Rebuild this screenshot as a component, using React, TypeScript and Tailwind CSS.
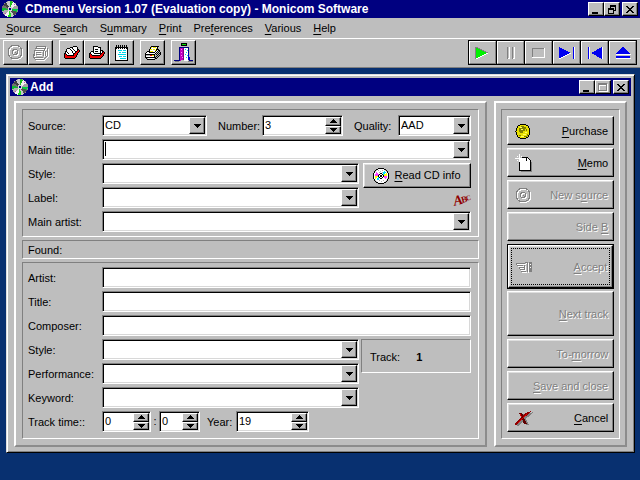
import React from "react";

const etched = "border border-t-[#808080] border-l-[#808080] border-r-white border-b-white";
const sunken =
  "border border-t-[#808080] border-l-[#808080] border-r-white border-b-white bg-white shadow-[inset_1px_1px_0_#000,inset_-1px_-1px_0_#d8d8d8]";
const smallRaised =
  "border border-t-white border-l-white border-r-black border-b-black shadow-[inset_-1px_-1px_0_#808080] bg-[#bebebe]";
const raised =
  "border border-t-white border-l-white border-r-black border-b-black shadow-[inset_-1px_-1px_0_#808080,inset_1px_1px_0_#dedede] bg-[#bebebe]";

function Svg({ w, h, children }: { w: number; h: number; children: React.ReactNode }) {
  return (
    <svg width={w} height={h} viewBox={`0 0 ${w} ${h}`} shapeRendering="crispEdges" className="block shrink-0" aria-hidden="true">
      {children}
    </svg>
  );
}

const inks: Record<string, string> = {
  K: "#000000",
  W: "#ffffff",
  R: "#f00000",
  Y: "#f0e800",
  G: "#b8b8b8",
};

/* Small bitmap, one letter per dot */
function Sprite({ rows }: { rows: string[] }) {
  return (
    <Svg w={rows[0].length} h={rows.length}>
      {rows.map((row, y) =>
        row.split("").map((c, x) => (inks[c] ? <rect key={`${x}-${y}`} x={x} y={y} width="1" height="1" fill={inks[c]} /> : null))
      )}
    </Svg>
  );
}

const cardBox = [
  ".........KKKK...",
  "......KKKWWWWK..",
  "...KKKWWKWWWWK..",
  "..KWWWKWWKWWWKK.",
  "..KWWWWKWWKWWKRK",
  ".KKWWWWWKWWKKRRK",
  ".KWKWWWWKWWKRRK.",
  "KKWWKWWWWKKRRK..",
  "KRKWWWWWWKRRRK..",
  "KRRKKKKKKKRRK...",
  "KRRRRRRRRRRRK...",
  "KRRRRRRRRRRK....",
  ".KKKKKKKKKK.....",
];

const cardBoxOpen = [
  "....KKKKK.......",
  "....KWWWWKKK....",
  "....KWWWWWWK....",
  "....KWKKKWWK....",
  "....KWWWWWWKKK..",
  "..KKKWKKKWWKWKK.",
  ".KWWKWWWWWWKWKRK",
  "KKWWWKKKKKKKKRRK",
  "KRKWWWWWWWWKRRK.",
  "KRRKKKKKKKKRRRK.",
  "KRRRRRRRRRRRRK..",
  "KRRRRRRRRRRRK...",
  ".KKKKKKKKKKK....",
];

const printer = [
  "......KKKKKKKK..",
  ".....KYWYYYWK...",
  ".....KWWWWWYK...",
  "....KYYWYYWKKK..",
  "....KWWWWWYKWKK.",
  "..KKKYYYWWKWKGK.",
  ".KWWKKKKKKWKGKGK",
  "KWWWWWWWWWKGKGKK",
  "KKKKKKKKKKGKGKGK",
  "KGGGGRRYYKGGKGK.",
  "KWWWWWWWWKGKGK..",
  "KKKKKKKKKKKGK...",
  ".KGWWWWWWGKK....",
  "..KKKKKKKK......",
];

function DiscLogo() {
  return (
    <Svg w={16} h={16}>
      <circle cx="8" cy="8" r="8" fill="#8a8a8a" />
      <path d="M8 8L1 4L4 1Z" fill="#404040" />
      <path d="M8 8L4 1L8 0Z" fill="#c8c8c8" />
      <path d="M8 8L8 0L11 1Z" fill="#20c020" />
      <path d="M8 8L11 1L15 4Z" fill="#f0f0f0" />
      <path d="M8 8L15 4L16 8Z" fill="#a0a0a0" />
      <path d="M8 8L16 8L15 11Z" fill="#00d040" />
      <path d="M8 8L15 11L12 15Z" fill="#505050" />
      <path d="M8 8L12 15L9 16Z" fill="#c8c8c8" />
      <path d="M8 8L9 16L6 16Z" fill="#20e020" />
      <path d="M8 8L6 16L2 14Z" fill="#f8f8f8" />
      <path d="M8 8L2 14L0 10Z" fill="#b0b0b0" />
      <path d="M8 8L0 10L0 7Z" fill="#10b830" />
      <path d="M8 8L0 7L1 4Z" fill="#707070" />
      <path d="M12 3h1v1h-1zM3 12h1v1h-1z" fill="#c040c0" />
      <rect x="6" y="6" width="4" height="4" fill="#d8d8d8" />
      <rect x="7" y="7" width="2" height="2" fill="#000080" />
    </Svg>
  );
}

function DiscColor() {
  return (
    <Svg w={16} h={16}>
      <circle cx="8" cy="8" r="7" fill="#fff" />
      <path d="M3 4L7 8L2 8Z" fill="#ff40ff" />
      <path d="M2 8L7 8L2 11Z" fill="#ffff00" />
      <path d="M3 11L7 8L5 13Z" fill="#00e0ff" />
      <path d="M13 4L9 8L11 3Z" fill="#00e0ff" />
      <path d="M14 8L9 8L14 5Z" fill="#ffff00" />
      <path d="M13 12L9 8L14 8Z" fill="#ff40ff" />
      <path d="M5 2h1v1h-1zM7 3h1v1h-1zM9 2h1v1h-1zM6 4h1v1h-1zM9 4h1v1h-1zM6 12h1v1h-1zM8 13h1v1h-1zM10 12h1v1h-1z" fill="#b0b0b0" />
      <path
        d="M5 0h6v1H5zM3 1h2v1H3zM11 1h2v1h-2zM2 2h1v1H2zM13 2h1v1h-1zM1 3h1v2H1zM14 3h1v2h-1zM0 5h1v6H0zM15 5h1v6h-1zM1 11h1v2H1zM14 11h1v2h-1zM2 13h1v1H2zM13 13h1v1h-1zM3 14h2v1H3zM11 14h2v1h-2zM5 15h6v1H5z"
        fill="#000"
      />
      <rect x="6" y="6" width="4" height="4" fill="#fff" />
      <path d="M7 5h2v1H7zM6 6h1v1H6zM9 6h1v1H9zM5 7h1v2H5zM10 7h1v2h-1zM6 9h1v1H6zM9 9h1v1H9zM7 10h2v1H7zM7 7h2v2H7z" fill="#000" />
    </Svg>
  );
}

function DiscGray() {
  return (
    <Svg w={17} h={17}>
      <g fill="none" stroke="#fff">
        <circle cx="9" cy="9" r="7" />
        <circle cx="9" cy="9" r="2.5" />
      </g>
      <g fill="none" stroke="#808080">
        <circle cx="8" cy="8" r="7" />
        <circle cx="8" cy="8" r="2.5" />
      </g>
      <rect x="8" y="8" width="1" height="1" fill="#808080" />
    </Svg>
  );
}

function StackGray() {
  const lines = "M4 2h9v3M3 4h9v3M4 2v2M2 6h9v6M2 6v6M1 13l2 2h9l3-3V4M4 8h5M4 10h5M1 10v3h10M13 7v5";
  return (
    <Svg w={17} h={17}>
      <path d={lines} transform="translate(1 1)" fill="none" stroke="#fff" />
      <path d={lines} fill="none" stroke="#808080" />
    </Svg>
  );
}

function Notepad() {
  return (
    <Svg w={14} h={16}>
      <path d="M0 2h13v14H0z" fill="#000" />
      <path d="M1 3h11v12H1z" fill="#fff" />
      <path d="M1 0h1v4H1zM3 0h1v4H3zM5 0h1v4H5zM7 0h1v4H7zM9 0h1v4H9zM11 0h1v4h-1z" fill="#000" />
      <path d="M3 5h4v1H3zM8 5h3v1H8zM4 7h2v1H4zM7 7h4v1H7zM3 9h8v1H3zM4 11h3v1H4zM8 11h3v1H8zM5 13h6v1H5z" fill="#00d8e8" />
    </Svg>
  );
}

function ExitDoor() {
  return (
    <Svg w={20} h={20}>
      <rect x="7" y="0" width="6" height="3" fill="#000" />
      <rect x="8" y="1" width="4" height="1" fill="#00e000" />
      <path d="M5 4h10v1h-10zM5 5h1v13h-1zM14 5h1v3h-1zM0 17h6v1H0zM15 17h4v1h-4z" fill="#000080" />
      <path d="M6 5h4v11l-4 2z" fill="#c000c0" />
      <path d="M7 6h1v1h-1zM7 9h1v1h-1zM7 12h1v1h-1zM8 14h1v1h-1z" fill="#ff80ff" />
      <path d="M9 5h1v12h-1z" fill="#800080" />
      <path d="M10 5h4v13h-4z" fill="#fff" />
      <path d="M11 6h1v1h-1zM13 7h1v1h-1zM12 9h1v1h-1zM11 11h1v1h-1zM13 12h1v1h-1zM12 14h1v1h-1z" fill="#00d8e8" />
      <path d="M14 8h1v2h-1z" fill="#000080" />
      <path d="M14 10h1v4h1v3h-2z" fill="#0000c0" />
      <path d="M1 18h4v1H1zM14 18h5v1h-5z" fill="#808080" />
    </Svg>
  );
}

function Coin() {
  return (
    <Svg w={18} h={17}>
      <ellipse cx="8" cy="8.5" rx="7" ry="7.5" fill="#e8e000" stroke="#000" />
      <path d="M6 3h3v1h2v2h-1v2h-2v2h-3v-1h-1v-4h1z" fill="#808000" />
      <path d="M5 4h2v1h-2zM6 6h2v1h-2zM8 11h3v1h-3zM10 9h2v1h-2zM6 13h3v1h-3z" fill="#ffff60" />
      <path d="M9 13h3v-2h1v2h-1v1h-3zM11 6h1v2h-1zM4 12h2v1h-2z" fill="#808000" />
    </Svg>
  );
}

function NewPage() {
  return (
    <Svg w={18} h={18}>
      <path d="M6 5h8v1h1v1h1v1h1v10H6z" fill="#808080" />
      <path d="M5 4h7l4 4v8H5z" fill="#fff" />
      <path d="M7 3h6v1h1v1h1v1h1v11H4V7h1v9h10V7h-4V4H7z" fill="#000" />
      <path d="M12 4l3 3h-3z" fill="#fff" />
      <path d="M4 0h1v8h-1zM0 4h9v1H0zM2 2h1v1h-1zM6 2h1v1h-1zM6 6h1v1h-1zM2 6h1v1h-1z" fill="#fff" />
    </Svg>
  );
}

function Hand() {
  const shape = "M0 2h9v1H0zM0 3h1v1H0zM1 4h6v1H1zM3 6h5v1H3zM3 7h1v1h-1zM4 8h4v1H4zM5 10h5v1H5zM9 1h2v1h-2zM11 1h1v10h-1zM8 4h1v5h-1z";
  return (
    <Svg w={18} h={13}>
      <path d={shape} transform="translate(1 1)" fill="#fff" />
      <path d={shape} fill="#808080" />
      <path d="M13 1h3v10h-3z" fill="#808080" />
      <path d="M14 3h1v1h-1zM14 6h1v1h-1z" fill="#fff" />
    </Svg>
  );
}

function RedCross() {
  return (
    <Svg w={18} h={16}>
      <g transform="translate(2 1)" fill="#808080">
        <path d="M0 12l6-6 5-4 5-2-5 5-5 4-4 5H0z" />
        <path d="M4 2h3l2 5 3 6H9L7 8z" />
      </g>
      <path d="M0 12l6-6 5-4 5-2-5 5-5 4-4 5H0z" fill="#900000" />
      <path d="M4 2h3l2 5 3 6H9L7 8z" fill="#600000" />
      <path d="M2 12l6-6 4-3-5 5-4 4zM5 3h1l1 3H6z" fill="#e00000" />
    </Svg>
  );
}

function DownArrow() {
  return (
    <Svg w={7} h={4}>
      <path d="M0 0h7v1H0zM1 1h5v1H1zM2 2h3v1H2zM3 3h1v1H3z" />
    </Svg>
  );
}

function UpArrow() {
  return (
    <Svg w={7} h={4}>
      <path d="M3 0h1v1H3zM2 1h3v1H2zM1 2h5v1H1zM0 3h7v1H0z" />
    </Svg>
  );
}

/* Field kinds */

function Combo({ id, value = "" }: { id: string; value?: string }) {
  return (
    <div className={`grid h-[21px] min-w-0 grid-cols-[minmax(0,1fr)_16px] p-px ${sunken}`}>
      <select id={id} defaultValue={value} className="col-span-2 col-start-1 row-start-1 h-4 appearance-none bg-transparent pl-px leading-4 outline-none">
        <option>{value}</option>
      </select>
      <span className={`pointer-events-none col-start-2 row-start-1 flex items-center justify-center ${smallRaised}`}>
        <DownArrow />
      </span>
    </div>
  );
}

function EditCombo({ id }: { id: string }) {
  return (
    <div className={`flex h-[21px] min-w-0 p-px ${sunken}`}>
      <span className="mt-px ml-px h-[14px] w-px bg-black" />
      <input id={id} className="min-w-0 flex-1 bg-transparent outline-none" />
      <button aria-label="Open list" className={`flex w-4 items-center justify-center ${smallRaised}`}>
        <DownArrow />
      </button>
    </div>
  );
}

function Spin({ id, value, label }: { id: string; value: string; label?: string }) {
  return (
    <div className={`flex h-[21px] min-w-0 p-px ${sunken}`}>
      <input id={id} aria-label={label} defaultValue={value} className="h-4 min-w-0 flex-1 bg-transparent pl-px leading-4 outline-none" />
      <div className="flex w-4 shrink-0 flex-col">
        <button aria-label="Up" className={`flex flex-1 items-center justify-center ${smallRaised}`}>
          <UpArrow />
        </button>
        <button aria-label="Down" className={`flex flex-1 items-center justify-center ${smallRaised}`}>
          <DownArrow />
        </button>
      </div>
    </div>
  );
}

function Row({ id, label, children }: { id: string; label: string; children: React.ReactNode }) {
  return (
    <div className="grid grid-cols-[74px_minmax(0,1fr)] items-center">
      <label htmlFor={id} className="pt-0.5">
        {label}
      </label>
      {children}
    </div>
  );
}

/* Text with one underlined access key */
function Key({ text, at = 0 }: { text: string; at?: number }) {
  return (
    <span className="whitespace-pre">
      {text.slice(0, at)}
      <span className="underline underline-offset-2">{text[at]}</span>
      {text.slice(at + 1)}
    </span>
  );
}

type SideButtonProps = {
  text: string;
  at?: number;
  icon?: React.ReactNode;
  tall?: boolean;
  disabled?: boolean;
  focus?: boolean;
};

function SideButton({ text, at, icon, tall, disabled, focus }: SideButtonProps) {
  return (
    <button disabled={disabled} className={`flex w-full ${tall ? "h-[45px]" : "h-[29px]"} ${focus ? "border border-black" : ""}`}>
      <span
        className={`flex h-full w-full items-center justify-between pt-0.5 pr-[5px] pl-[7px] ${raised} ${
          disabled ? "text-[#808080] [text-shadow:1px_1px_0_#fff]" : ""
        } ${focus ? "outline-1 -outline-offset-4 outline-dotted outline-black" : ""}`}
      >
        <span className="w-[18px]">{icon}</span>
        <Key text={text} at={at} />
      </span>
    </button>
  );
}

function WindowButtons({ middle }: { middle: "restore" | "max" }) {
  const btn = `flex h-[14px] w-4 items-center justify-center ${smallRaised}`;
  return (
    <div className="flex">
      <button aria-label="Minimize" className={btn}>
        <Svg w={10} h={9}>
          <path d="M1 7h6v2H1z" />
        </Svg>
      </button>
      <button aria-label={middle === "restore" ? "Restore" : "Maximize"} disabled={middle === "max"} className={btn}>
        <Svg w={10} h={9}>
          {middle === "restore" ? (
            <path d="M3 0h6v6H7V5h1V2H4v1H3zM1 3h6v6H1zM2 5v3h4V5z" fillRule="evenodd" />
          ) : (
            <>
              <path d="M1 1h9v8H1zM2 3v5h7V3z" fillRule="evenodd" fill="#fff" />
              <path d="M0 0h9v8H0zM1 2v5h7V2z" fillRule="evenodd" fill="#808080" />
            </>
          )}
        </Svg>
      </button>
      <button aria-label="Close" className={`ml-0.5 ${btn}`}>
        <Svg w={8} h={7}>
          <path d="M0 0h2v1h1v1h2V1h1V0h2v1H7v1H6v1H5v1h1v1h1v1h1v1H6V6H5V5H3v1H2v1H0V6h1V5h1V4h1V3H2V2H1V1H0z" />
        </Svg>
      </button>
    </div>
  );
}

const menus: [string, number][] = [
  ["Source", 0],
  ["Search", 1],
  ["Summary", 1],
  ["Print", 0],
  ["Preferences", 3],
  ["Various", 0],
  ["Help", 0],
];

const tools: { name: string; icon: React.ReactNode; gap?: boolean; off?: boolean }[] = [
  { name: "New source", icon: <DiscGray />, off: true },
  { name: "Edit source", icon: <StackGray />, off: true },
  { name: "Search", icon: <Sprite rows={cardBox} />, gap: true },
  { name: "Search card", icon: <Sprite rows={cardBoxOpen} /> },
  { name: "Summary", icon: <Notepad /> },
  { name: "Print", icon: <Sprite rows={printer} />, gap: true },
  { name: "Exit", icon: <ExitDoor />, gap: true },
];

const players: { name: string; icon: React.ReactNode; off?: boolean }[] = [
  {
    name: "Play",
    icon: (
      <>
        <path d="M1 0l12 6-12 6z" fill="#00f000" />
        <path d="M0 0h1v12H0z" fill="#808080" />
        <path d="M1 0L13 6" stroke="#808080" />
        <path d="M1 12L13 6" stroke="#fff" />
      </>
    ),
  },
  {
    name: "Pause",
    off: true,
    icon: (
      <>
        <path d="M4 0h1v12h-1zM9 0h1v12h-1z" fill="#808080" />
        <path d="M6 0h1v12h-2v-1h1zM11 0h1v12h-2v-1h1z" fill="#fff" />
      </>
    ),
  },
  {
    name: "Stop",
    off: true,
    icon: (
      <>
        <path d="M1 1h13v1H1zM1 1h1v10H1z" fill="#808080" />
        <path d="M1 10h13v1H1zM13 1h1v10h-1z" fill="#fff" />
      </>
    ),
  },
  {
    name: "Next",
    icon: (
      <>
        <path d="M0 0l12 6-12 6z" fill="#0000f0" />
        <path d="M0 12L12 6" stroke="#fff" />
        <path d="M14 0h1v12h-1z" fill="#0000f0" />
        <path d="M15 0h1v12h-1z" fill="#fff" />
      </>
    ),
  },
  {
    name: "Previous",
    icon: (
      <>
        <path d="M15 0L4 6l11 6z" fill="#0000f0" />
        <path d="M15 0h1v12h-1z" fill="#fff" />
        <path d="M1 0h1v12H1z" fill="#0000f0" />
        <path d="M2 0h1v12H2z" fill="#fff" />
      </>
    ),
  },
  {
    name: "Eject",
    icon: (
      <>
        <path d="M8 0l8 7H0z" fill="#0000f0" />
        <path d="M1 7h15v1H1zM1 11h15v1H1z" fill="#fff" />
        <path d="M1 9h14v2H1z" fill="#0000f0" />
      </>
    ),
  },
];

function Toolbar() {
  return (
    <div className="flex h-[30px] items-start justify-between border-t border-b border-t-white border-b-[#808080] px-[3px] pt-px">
      <div className="flex">
        {tools.map((t) => (
          <button
            key={t.name}
            aria-label={t.name}
            disabled={t.off}
            className={`flex h-[25px] w-[25px] items-center justify-center ${smallRaised} ${t.gap ? "ml-1.5" : ""}`}
          >
            {t.icon}
          </button>
        ))}
      </div>
      <div className="flex gap-px border border-black bg-black">
        {players.map((p) => (
          <button
            key={p.name}
            aria-label={p.name}
            disabled={p.off}
            className="flex h-[23px] w-[27px] items-center justify-center border border-t-white border-l-white border-r-[#808080] border-b-[#808080] bg-[#bebebe]"
          >
            <Svg w={16} h={12}>
              {p.icon}
            </Svg>
          </button>
        ))}
      </div>
    </div>
  );
}

function MainPanel() {
  return (
    <form
      className="flex min-w-0 flex-1 flex-col gap-[3px] border-2 border-t-white border-l-white border-r-[#8c8c8c] border-b-[#8c8c8c] p-1.5"
      onSubmit={(e) => e.preventDefault()}
    >
      <div className={`flex flex-col gap-[3px] pt-[5px] pr-[7px] pb-1 pl-[5px] ${etched}`}>
        <div className="grid grid-cols-[74px_minmax(0,1fr)_44px_81px_55px_73px] items-center">
          <label htmlFor="source" className="pt-0.5">
            Source:
          </label>
          <div className="mr-[11px]">
            <Combo id="source" value="CD" />
          </div>
          <label htmlFor="number" className="pt-0.5">
            Number:
          </label>
          <Spin id="number" value="3" />
          <label htmlFor="quality" className="pt-0.5 pl-[11px]">
            Quality:
          </label>
          <Combo id="quality" value="AAD" />
        </div>
        <Row id="maintitle" label="Main title:">
          <EditCombo id="maintitle" />
        </Row>
        <div className="flex gap-1">
          <div className="flex min-w-0 flex-1 flex-col gap-[3px]">
            <Row id="style" label="Style:">
              <Combo id="style" />
            </Row>
            <Row id="label" label="Label:">
              <Combo id="label" />
            </Row>
          </div>
          <div className="flex h-[45px] w-[108px] flex-col items-end justify-between">
            <button className={`flex h-[25px] w-full items-center justify-center gap-[5px] ${raised}`}>
              <DiscColor />
              <Key text="Read CD info" />
            </button>
            <svg width="20" height="18" viewBox="0 0 20 18" aria-label="ABC" className="overflow-visible">
              <g fill="#900000" fontFamily="'Liberation Serif', serif" fontWeight="bold" transform="rotate(-14 10 9)">
                <text x="2" y="14" fontSize="14" fontStyle="italic">
                  A
                </text>
                <text x="10" y="13" fontSize="9">
                  B
                </text>
                <text x="15" y="12" fontSize="7">
                  C
                </text>
              </g>
            </svg>
          </div>
        </div>
        <Row id="mainartist" label="Main artist:">
          <Combo id="mainartist" />
        </Row>
      </div>

      <div className={`flex h-[19px] items-center pt-0.5 pl-[5px] ${etched}`}>Found:</div>

      <div className={`flex flex-col gap-[3px] pt-1 pr-[7px] pb-1.5 pl-[5px] ${etched}`}>
        {["Artist", "Title", "Composer"].map((name) => (
          <Row key={name} id={name} label={`${name}:`}>
            <input id={name} className={`h-[21px] w-full px-1 outline-none ${sunken}`} />
          </Row>
        ))}
        <div className="flex gap-0.5">
          <div className="flex min-w-0 flex-1 flex-col gap-[3px]">
            {["Style", "Performance", "Keyword"].map((name) => (
              <Row key={name} id={`track-${name}`} label={`${name}:`}>
                <Combo id={`track-${name}`} />
              </Row>
            ))}
          </div>
          <div className={`flex h-[34px] w-[110px] items-center gap-4 pt-0.5 pl-2 ${etched}`}>
            <span>Track:</span>
            <b>1</b>
          </div>
        </div>
        <div className="grid grid-cols-[74px_49px_8px_41px_36px_73px] items-center">
          <label htmlFor="minutes" className="pt-0.5">
            Track time::
          </label>
          <Spin id="minutes" value="0" />
          <span className="text-center">:</span>
          <Spin id="seconds" label="Seconds" value="0" />
          <label htmlFor="year" className="pt-0.5 pl-[7px]">
            Year:
          </label>
          <Spin id="year" value="19" />
        </div>
      </div>
    </form>
  );
}

function SidePanel() {
  return (
    <div className="flex w-[133px] border-2 border-t-white border-l-white border-r-[#8c8c8c] border-b-[#8c8c8c] p-1.5 pl-[5px]">
      <div className={`flex flex-1 flex-col justify-between px-[5px] py-1.5 ${etched}`}>
        <SideButton text="Purchase" icon={<Coin />} />
        <SideButton text="Memo" icon={<NewPage />} />
        <SideButton text="New source" at={5} icon={<DiscGray />} disabled />
        <SideButton text="Side B" at={5} disabled />
        <SideButton text="Accept" icon={<Hand />} tall disabled focus />
        <SideButton text="Next track" tall disabled />
        <SideButton text="To-morrow" at={3} disabled />
        <SideButton text="Save and close" disabled />
        <SideButton text="Cancel" icon={<RedCross />} />
      </div>
    </div>
  );
}

export default function App() {
  return (
    <div className="min-h-screen bg-[#083070] font-['Liberation_Sans',Arial,sans-serif] text-[11px] leading-[13px] text-black">
      <div className="bg-[#bebebe]">
        <header className="flex h-[18px] items-center gap-[7px] bg-[#000080] px-0.5 text-white">
          <DiscLogo />
          <h1 className="flex-1 text-[12px] font-bold">CDmenu Version 1.07 (Evaluation copy) - Monicom Software</h1>
          <WindowButtons middle="restore" />
        </header>
        <nav className="flex h-5 items-center gap-3 pl-1.5">
          {menus.map(([text, at]) => (
            <button key={text}>
              <Key text={text} at={at} />
            </button>
          ))}
        </nav>
        <Toolbar />
      </div>

      <main className="mt-1.5 mr-[5px] ml-1.5 border border-t-[#dedede] border-l-[#dedede] border-r-black border-b-black bg-[#bebebe] p-[3px] shadow-[inset_1px_1px_0_#fff,inset_-1px_-1px_0_#808080]">
        <header className="flex h-[18px] items-center gap-0.5 bg-[#000080] px-0.5 text-white">
          <DiscLogo />
          <h2 className="flex-1 text-[12px] font-bold">Add</h2>
          <WindowButtons middle="max" />
        </header>
        <div className="flex gap-[7px] px-1 pt-[5px] pb-0.5">
          <MainPanel />
          <SidePanel />
        </div>
      </main>
    </div>
  );
}
